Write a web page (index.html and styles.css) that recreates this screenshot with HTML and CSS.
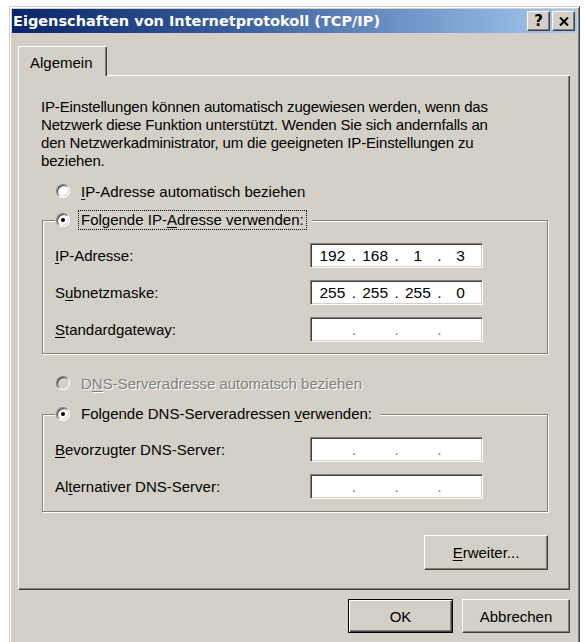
FILE: index.html
```html
<!DOCTYPE html>
<html lang="de">
<head>
<meta charset="utf-8">
<title>Eigenschaften von Internetprotokoll (TCP/IP)</title>
<link rel="stylesheet" href="styles.css">
</head>
<body>
<div class="window">
  <div class="titlebar">
    <span class="title">Eigenschaften von Internetprotokoll (TCP/IP)</span>
    <div class="caption-buttons">
      <span class="cap-btn help">?</span>
      <span class="cap-btn close"><svg width="10" height="9" viewBox="0 0 10 9"><path d="M1 0.5 L9 8.5 M9 0.5 L1 8.5" stroke="#000" stroke-width="2" fill="none"/></svg></span>
    </div>
  </div>
  <div class="body">
    <div class="tabstrip">
      <div class="tab">Algemein</div>
      <div class="tabfill"></div>
    </div>
    <div class="panel">
      <p class="desc">IP-Einstellungen können automatisch zugewiesen werden, wenn das<br>Netzwerk diese Funktion unterstützt. Wenden Sie sich andernfalls an<br>den Netzwerkadministrator, um die geeigneten IP-Einstellungen zu<br>beziehen.</p>

      <div class="radio-row first">
        <span class="radio"></span>
        <span class="rlabel"><u>I</u>P-Adresse automatisch beziehen</span>
      </div>

      <fieldset class="group group-ip">
        <legend class="legend">
          <span class="radio checked"></span>
          <span class="rlabel focus">Folgende IP-<u>A</u>dresse verwenden:</span>
        </legend>
        <div class="rows">
          <span class="flabel"><u>I</u>P-Adresse:</span>
          <div class="ip"><span>192</span><i>.</i><span>168</span><i>.</i><span>1</span><i>.</i><span>3</span></div>
          <span class="flabel">S<u>u</u>bnetzmaske:</span>
          <div class="ip"><span>255</span><i>.</i><span>255</span><i>.</i><span>255</span><i>.</i><span>0</span></div>
          <span class="flabel"><u>S</u>tandardgateway:</span>
          <div class="ip empty"><span></span><i>.</i><span></span><i>.</i><span></span><i>.</i><span></span></div>
        </div>
      </fieldset>

      <div class="radio-row second">
        <span class="radio disabled"></span>
        <span class="rlabel disabled-text">D<u>N</u>S-Serveradresse automatsch beziehen</span>
      </div>

      <fieldset class="group group-dns">
        <legend class="legend">
          <span class="radio checked"></span>
          <span class="rlabel plain">Folgende DNS-Serveradressen <u>v</u>erwenden:</span>
        </legend>
        <div class="rows">
          <span class="flabel"><u>B</u>evorzugter DNS-Server:</span>
          <div class="ip empty"><span></span><i>.</i><span></span><i>.</i><span></span><i>.</i><span></span></div>
          <span class="flabel">Al<u>t</u>ernativer DNS-Server:</span>
          <div class="ip empty"><span></span><i>.</i><span></span><i>.</i><span></span><i>.</i><span></span></div>
        </div>
      </fieldset>

      <div class="panel-actions">
        <button class="btn adv" type="button"><u>E</u>rweiter...</button>
      </div>
    </div>
    <div class="actions">
      <button class="btn ok default" type="button">OK</button>
      <button class="btn cancel" type="button">Abbrechen</button>
    </div>
  </div>
</div>
</body>
</html>
```

FILE: styles.css
```css
* { box-sizing: border-box; }
html, body { margin: 0; padding: 0; background: #fff; }
body {
  font-family: "Liberation Sans", Arial, sans-serif;
  font-size: 15px;
  color: #000;
}
u { text-decoration: underline; text-underline-offset: 2px; }

.window {
  margin: 6px 4px 0 9px;
  width: 571px;
  background: #d4d0c8;
  border: 1px solid;
  border-color: #d4d0c8 #404040 #404040 #d4d0c8;
  box-shadow: inset 1px 1px #fff, inset -1px -1px #808080;
  padding: 2px 2px 12px 2px;
}

.titlebar {
  height: 24px;
  display: flex;
  align-items: center;
  justify-content: space-between;
  background: linear-gradient(to right, #0a246a 0%, #3a5f9e 40%, #a6caf0 100%);
  padding: 0 2px 0 1px;
}
.title {
  color: #fff;
  font-family: "DejaVu Sans", Verdana, sans-serif;
  font-weight: bold;
  font-size: 14.5px;
  white-space: nowrap;
}
.caption-buttons { display: flex; gap: 2px; }
.cap-btn {
  width: 23px;
  height: 20px;
  background: #d4d0c8;
  border: 1px solid;
  border-color: #fff #404040 #404040 #fff;
  box-shadow: inset -1px -1px #808080;
  display: flex;
  align-items: center;
  justify-content: center;
  font-family: "DejaVu Sans", Verdana, sans-serif;
  font-weight: bold;
  font-size: 15px;
  line-height: 1;
}

.body { padding: 13px 7px 0 6px; }

.tabstrip { display: flex; align-items: flex-end; }
.tab {
  height: 30px;
  padding: 1px 13px 0 11px;
  border: 1px solid;
  border-bottom: none;
  border-color: #fff #404040 transparent #fff;
  box-shadow: inset -1px 0 #808080;
  border-radius: 2px 2px 0 0;
  display: flex;
  align-items: center;
}
.tabfill { flex: 1; height: 1px; background: #fff; }

.panel {
  border-left: 1px solid #fff;
  border-right: 1px solid #404040;
  border-bottom: 1px solid #404040;
  box-shadow: inset -1px -1px #808080;
  padding: 22px 21px 19px 22px;
}

.desc {
  margin: 0;
  line-height: 18px;
  white-space: nowrap;
  letter-spacing: -0.16px;
}

.radio-row {
  height: 22px;
  display: flex;
  align-items: center;
  padding-left: 15px;
}
.radio-row.first { margin-top: 10px; }
.radio-row.second { margin-top: 18px; }
.radio-row .rlabel { margin-left: 11px; }

.radio {
  width: 14px;
  height: 14px;
  flex: none;
  border-radius: 50%;
  background: #fff;
  border: 1px solid;
  border-color: #808080 #fff #fff #808080;
  box-shadow: inset 1px 1px #404040, inset -1px -1px #d4d0c8;
  display: inline-flex;
  align-items: center;
  justify-content: center;
}
.radio.checked::after {
  content: "";
  width: 4px;
  height: 4px;
  border-radius: 50%;
  background: #000;
}
.radio.disabled { background: #d4d0c8; }

.disabled-text { color: #808080; text-shadow: 1px 1px #fff; }

.group {
  margin: 0 0 0 1px;
  min-width: 0;
  border: 1px solid #808080;
  box-shadow: inset 1px 1px #fff, 1px 1px #fff;
  padding: 0 0 11px 12px;
}
.group-ip { margin-top: 7px; }
.group-dns { margin-top: 9px; padding-bottom: 12px; }

.legend {
  height: 22px;
  display: flex;
  align-items: center;
  padding: 0 5px 0 1px;
  background: #d4d0c8;
}
.legend .rlabel { margin-left: 8px; padding: 0 2px; line-height: 18px; border: 1px solid transparent; }
.legend .rlabel.focus { border: 1px dotted #000; }

.rows {
  margin-top: 12px;
  display: grid;
  grid-template-columns: 255px 173px;
  grid-auto-rows: 25px;
  row-gap: 12px;
  align-items: center;
}
.flabel { white-space: nowrap; }

.ip {
  width: 173px;
  height: 25px;
  background: #fff;
  border: 1px solid;
  border-color: #808080 #fff #fff #808080;
  box-shadow: inset 1px 1px #404040, inset -1px -1px #d4d0c8;
  display: grid;
  grid-template-columns: 1fr 4px 1fr 4px 1fr 4px 1fr;
  align-items: center;
  text-align: center;
  padding: 0 2px;
  font-size: 15.5px;
}
.ip i { font-style: normal; }
.ip.empty i { color: #777; }

.panel-actions {
  margin-top: 23px;
  display: flex;
  justify-content: flex-end;
}

.btn {
  font-family: "Liberation Sans", Arial, sans-serif;
  font-size: 15px;
  color: #000;
  background: #d4d0c8;
  border: 1px solid;
  border-color: #fff #404040 #404040 #fff;
  box-shadow: inset -1px -1px #808080;
  padding: 0;
  margin: 0;
}
.btn.adv { width: 124px; height: 35px; }

.actions {
  margin-top: 9px;
  display: flex;
  justify-content: flex-end;
  gap: 9px;
}
.btn.ok { width: 105px; height: 34px; }
.btn.cancel { width: 108px; height: 34px; }
.btn.default {
  border: 1px solid #000;
  box-shadow: inset 1px 1px #fff, inset -1px -1px #404040, inset -2px -2px #808080;
}
```
